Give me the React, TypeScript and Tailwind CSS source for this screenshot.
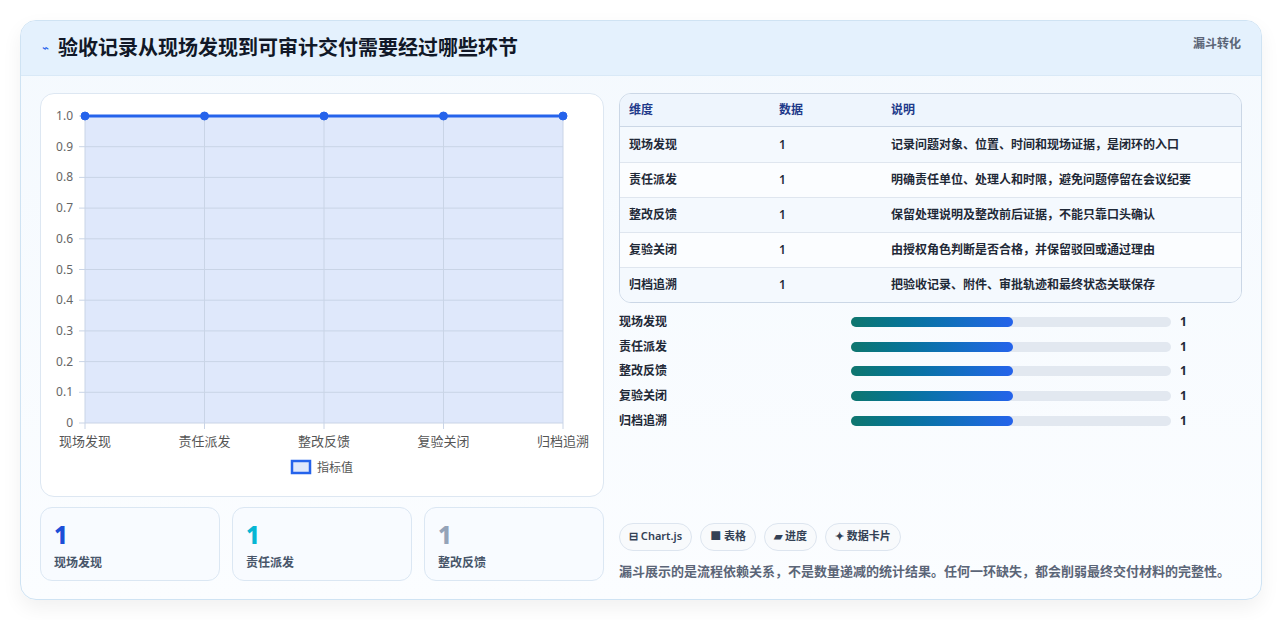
import React from "react";

const steps = ["现场发现", "责任派发", "整改反馈", "复验关闭", "归档追溯"];
const notes = [
  "记录问题对象、位置、时间和现场证据，是闭环的入口",
  "明确责任单位、处理人和时限，避免问题停留在会议纪要",
  "保留处理说明及整改前后证据，不能只靠口头确认",
  "由授权角色判断是否合格，并保留驳回或通过理由",
  "把验收记录、附件、审批轨迹和最终状态关联保存",
];

function LineChart() {
  const left = 44;
  const right = 522;
  const top = 22;
  const bottom = 329;
  const xs = steps.map((_, i) => left + ((right - left) / 4) * i);
  const ticks = Array.from({ length: 11 }, (_, i) => i / 10);
  const yOf = (v: number) => bottom - (bottom - top) * v;
  return (
    <svg width="563" height="400" className="block">
      <rect x={left} y={top} width={right - left} height={bottom - top} fill="#dfe8fb" />
      {ticks.map((t) => (
        <g key={t}>
          <line x1={left - 6} x2={right} y1={yOf(t)} y2={yOf(t)} stroke="#c9d4e6" strokeWidth="1" />
          <text x={left - 12} y={yOf(t) + 4} textAnchor="end" fontSize="12" fill="#666">
            {t === 0 ? "0" : t.toFixed(1)}
          </text>
        </g>
      ))}
      {xs.map((x, i) => (
        <g key={i}>
          <line x1={x} x2={x} y1={top} y2={bottom + 6} stroke="#c9d4e6" strokeWidth="1" />
          <text x={x} y={bottom + 23} textAnchor="middle" fontSize="13" fill="#555">
            {steps[i]}
          </text>
        </g>
      ))}
      <line x1={left} x2={right} y1={top} y2={top} stroke="#2563eb" strokeWidth="3" />
      {xs.map((x, i) => (
        <circle key={i} cx={x} cy={top} r="4" fill="#2563eb" stroke="#2563eb" strokeWidth="1" />
      ))}
      <rect x="251" y="367" width="18" height="12" fill="#dfe8fb" stroke="#2563eb" strokeWidth="2.5" />
      <text x="276" y="378" fontSize="12" fill="#555">
        指标值
      </text>
    </svg>
  );
}

export default function App() {
  return (
    <div
      className="min-h-[620px] bg-white p-[20px]"
      style={{ fontFamily: '"Noto Sans", "Noto Sans CJK SC", sans-serif' }}
    >
      <div className="overflow-hidden rounded-[16px] border border-[#cfe3f3] bg-gradient-to-b from-[#f4f9fe] to-[#fbfdff] shadow-[0_8px_20px_rgba(0,0,0,0.06)]">
        <div className="flex h-[55px] items-center justify-between border-b border-[#d9e9f7] bg-[#e4f1fd] px-[20px]">
          <div className="flex items-center gap-[10px]">
            <span className="text-[12px] italic text-[#2563eb]">⌁</span>
            <h1 className="text-[20px] font-bold text-[#111827]">验收记录从现场发现到可审计交付需要经过哪些环节</h1>
          </div>
          <span className="-mt-[8px] text-[12px] font-bold text-[#5b6577]">漏斗转化</span>
        </div>
        <div className="flex gap-[15px] px-[19px] pb-[18px] pt-[17px]">
          <div className="w-[564px] shrink-0">
            <div className="h-[404px] rounded-[14px] border border-[#dde7f2] bg-white">
              <LineChart />
            </div>
            <div className="mt-[10px] grid grid-cols-3 gap-[12px]">
              {[
                ["现场发现", "text-[#1d4ed8]"],
                ["责任派发", "text-[#06b6d4]"],
                ["整改反馈", "text-[#94a3b8]"],
              ].map(([l, c]) => (
                <div key={l} className="h-[74px] rounded-[12px] border border-[#dbe7f3] bg-[#f8fbff] px-[13px] pt-[12px]">
                  <div className={`text-[24px] font-extrabold leading-[30px] ${c}`}>1</div>
                  <div className="mt-[4px] text-[12px] font-semibold text-[#475569]">{l}</div>
                </div>
              ))}
            </div>
          </div>
          <div className="flex flex-1 flex-col">
            <div className="overflow-hidden rounded-[12px] border border-[#cbd7e6]">
              <div className="flex h-[33px] items-center border-b border-[#cbd7e6] bg-[#eef5fd] text-[12px] font-bold text-[#1e3a8a]">
                <div className="w-[159px] pl-[9px]">维度</div>
                <div className="w-[112px]">数据</div>
                <div>说明</div>
              </div>
              {steps.map((s, i) => (
                <div
                  key={s}
                  className={`flex h-[35px] items-center text-[12px] font-semibold text-[#1f2937] ${i > 0 ? "border-t border-[#dfe6ef]" : ""} ${i % 2 === 0 ? "bg-[#f4f9fe]" : "bg-[#fbfdff]"}`}
                >
                  <div className="w-[159px] pl-[9px]">{s}</div>
                  <div className="w-[112px]">1</div>
                  <div>{notes[i]}</div>
                </div>
              ))}
            </div>
            <div className="mt-[7px] flex flex-col">
              {steps.map((s) => (
                <div key={s} className="flex h-[24.6px] items-center text-[12px] font-semibold text-[#1f2937]">
                  <div className="w-[232px]">{s}</div>
                  <div className="h-[10px] w-[320px] rounded-full bg-[#e2e8f0]">
                    <div className="h-full w-[162px] rounded-full bg-gradient-to-r from-[#0f766e] to-[#2563eb]" />
                  </div>
                  <div className="ml-[9px] font-bold">1</div>
                </div>
              ))}
            </div>
            <div className="mt-auto">
              <div className="flex gap-[8px]">
                {["⊟ Chart.js", "■ 表格", "▰ 进度", "✦ 数据卡片"].map((t) => (
                  <span key={t} className="flex h-[28px] items-center rounded-full border border-[#dde5ef] bg-[#f8fafc] px-[9px] text-[11px] font-semibold text-[#334155]">
                    {t}
                  </span>
                ))}
              </div>
              <p className="mt-[11px] text-[13px] font-semibold text-[#5b6577]">
                漏斗展示的是流程依赖关系，不是数量递减的统计结果。任何一环缺失，都会削弱最终交付材料的完整性。
              </p>
            </div>
          </div>
        </div>
      </div>
    </div>
  );
}
